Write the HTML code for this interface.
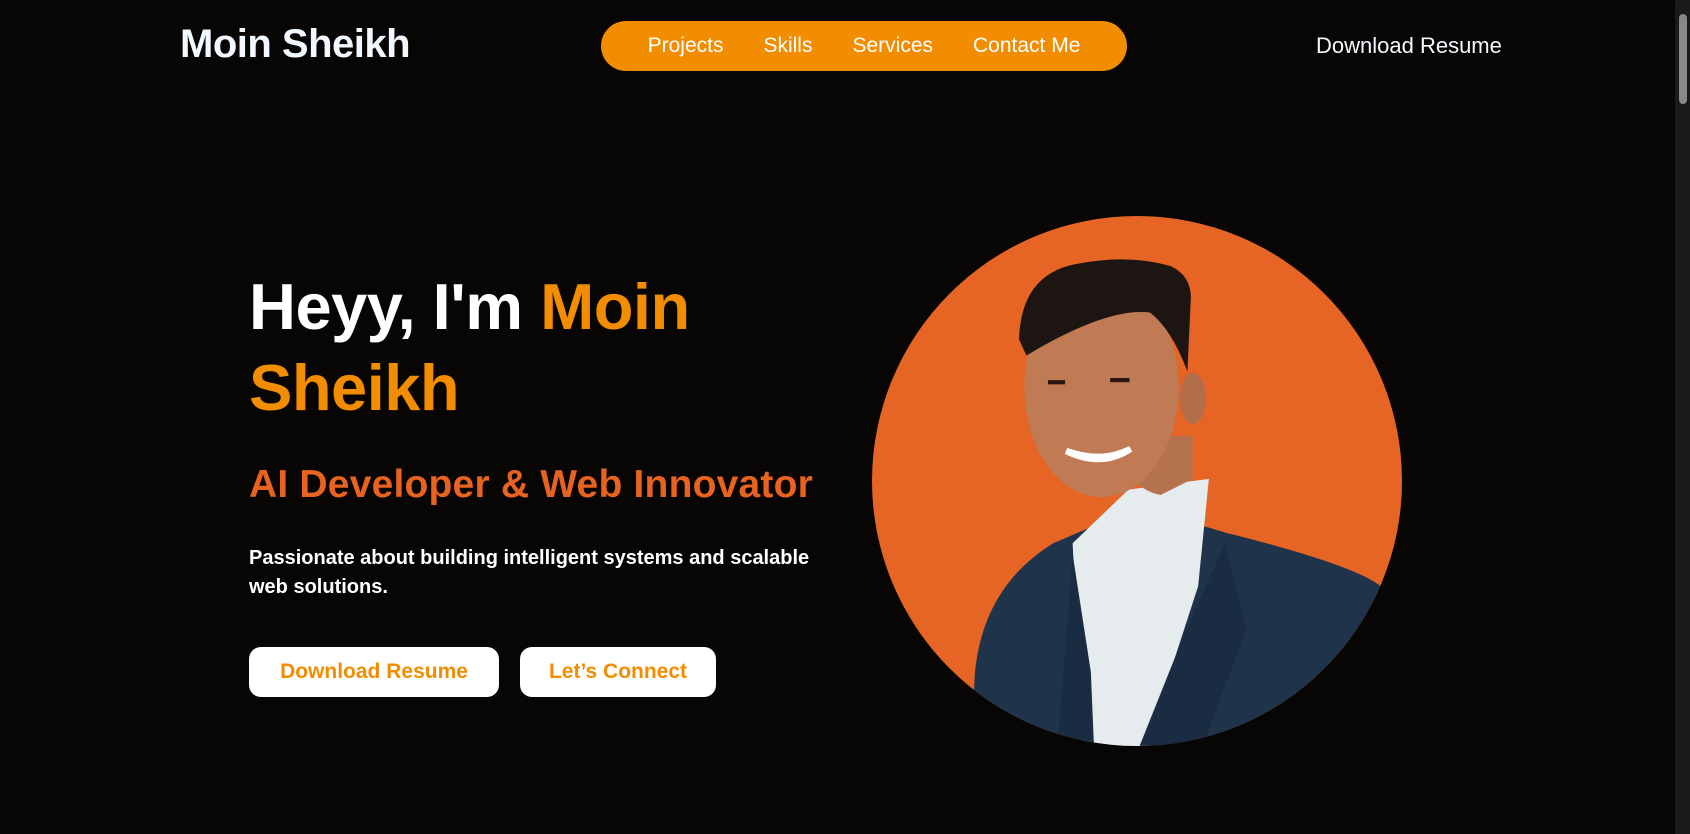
<!DOCTYPE html>
<html><head><meta charset="utf-8"><style>
*{margin:0;padding:0;box-sizing:border-box}
html,body{width:1690px;height:834px;overflow:hidden;background:#080604;font-family:"Liberation Sans",sans-serif;color:#fff}
.logo{position:absolute;left:180px;top:22px;font-size:40px;font-weight:700;color:#f2f8ff;letter-spacing:-0.5px}
.nav{position:absolute;left:601px;top:21px;width:526px;height:50px;border-radius:25px;background:#f28c00;display:flex;align-items:center;justify-content:center;gap:40px;font-size:21px;color:#fff}
.dl{position:absolute;left:1316px;top:33px;font-size:22px;color:#f2f8ff}
.sb{position:absolute;right:0;top:0;width:15px;height:834px;background:#1a1a1a}
.sb div{position:absolute;left:4px;top:14px;width:8px;height:90px;background:#888;border-radius:4px}
h1{position:absolute;left:249px;top:266px;font-size:65px;line-height:81px;font-weight:700;letter-spacing:-0.5px}
h1 span{color:#f28c00}
h2{position:absolute;left:249px;top:463px;font-size:39px;font-weight:700;color:#e96320;letter-spacing:0.2px}
p{position:absolute;left:249px;top:544px;font-size:20px;line-height:29px;width:700px;font-weight:700;color:#fff}
.btn{position:absolute;top:647px;height:50px;border-radius:12px;background:#fff;color:#f28c00;font-weight:700;font-size:21px;display:flex;align-items:center;justify-content:center}
</style></head><body>
<div class="logo">Moin Sheikh</div>
<div class="nav"><span>Projects</span><span>Skills</span><span>Services</span><span>Contact Me</span></div>
<div class="dl">Download Resume</div>
<h1>Heyy, I'm <span>Moin<br>Sheikh</span></h1>
<h2>AI Developer &amp; Web Innovator</h2>
<p>Passionate about building intelligent systems and scalable<br>web solutions.</p>
<div class="btn" style="left:249px;width:250px">Download Resume</div>
<div class="btn" style="left:520px;width:196px">Let’s Connect</div>
<svg style="position:absolute;left:0;top:0" width="1690" height="834">
<defs><clipPath id="c"><circle cx="1137" cy="481" r="265"/></clipPath></defs>
<circle cx="1137" cy="481" r="265" fill="#e66424"/>
<g clip-path="url(#c)">
<g transform="translate(1137 481) scale(1.073) translate(-1118 -462)">
<path d="M967 640 Q975 560 1040 520 L1075 505 L1150 495 L1200 510 Q1320 540 1345 560 Q1360 640 1350 760 L960 760 Z" fill="#1f334a"/>
<path d="M1058 520 L1110 470 L1185 460 L1175 560 L1110 760 L1070 760 Z" fill="#e6ecee"/>
<path d="M1185 460 L1200 520 L1160 610 L1100 760 L1160 760 L1220 600 Z" fill="#1a2c42"/>
<path d="M1058 530 L1075 640 L1080 760 L1040 760 Z" fill="#1a2c42"/>
<path d="M1090 420 Q1110 470 1140 475 L1170 460 L1170 420 Z" fill="#b5724e"/>
<ellipse cx="1085" cy="375" rx="72" ry="102" fill="#c07b55"/>
<ellipse cx="1170" cy="385" rx="12" ry="24" fill="#b26e4b"/>
<path d="M1008 330 Q1010 270 1060 260 Q1110 250 1150 262 Q1170 272 1168 295 L1165 360 Q1150 320 1130 305 Q1090 300 1015 345 Z" fill="#1c1512"/>
<path d="M1052 434 Q1085 450 1112 432 Q1085 446 1052 434 Z" fill="#fff" stroke="#fff" stroke-width="6"/>
<path d="M1035 370 l16 0 M1093 368 l18 0" stroke="#2a1810" stroke-width="4"/>
</g>
</g>
</svg>
<div class="sb"><div></div></div>
</body></html>
